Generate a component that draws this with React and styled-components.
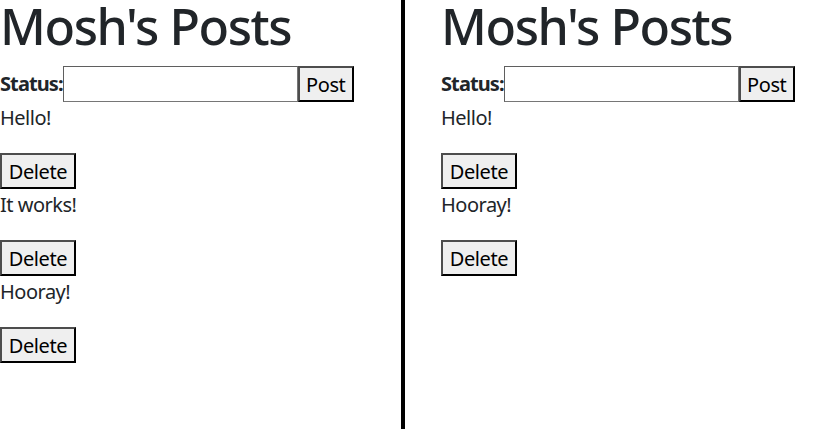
import React from "react";
import styled, { createGlobalStyle } from "styled-components";

const Global = createGlobalStyle`
  html, body { margin: 0; padding: 0; background: #fff; }
  body {
    font-family: "Noto Sans", "Open Sans", sans-serif;
    font-size: 20px;
    line-height: 1.5;
    color: #212529;
    overflow: hidden;
  }
`;

const Page = styled.div`
  display: flex;
  height: 429px;
`;

const Panel = styled.section`
  box-sizing: border-box;
  flex: ${(p) => (p.$first ? "0 0 405px" : "1")};
  padding-left: ${(p) => (p.$first ? "0" : "36px")};
  border-right: ${(p) => (p.$first ? "4px solid #000" : "none")};
`;

const Title = styled.h1`
  margin: 0 0 16px;
  padding-top: 1px;
  height: 50px;
  font-size: 50px;
  font-weight: 500;
  line-height: 50px;
  letter-spacing: -1.4px;
  white-space: nowrap;
`;

const Form = styled.form`
  display: flex;
  align-items: center;
  height: 36px;
  margin: -1px 0 0;
`;

const Label = styled.label`
  font-weight: 700;
  font-size: 20px;
  letter-spacing: -0.9px;
`;

const Input = styled.input`
  box-sizing: border-box;
  width: 235px;
  height: 36px;
  border: 1px solid #767676;
  border-top-color: #5f5f5f;
  border-left-color: #5f5f5f;
  padding: 1px 3px;
  font: inherit;
  margin: 0;
  background: #fff;
`;

const Button = styled.button`
  box-sizing: border-box;
  height: 36px;
  width: ${(p) => p.$w}px;
  padding: 0;
  margin: 0;
  background: #efefef;
  border: 2px solid;
  border-color: #4d4d4d #000 #000 #4d4d4d;
  font-family: inherit;
  font-size: 20px;
  color: #000;
  letter-spacing: -0.4px;
`;

const List = styled.div`
  padding-top: 1px;
`;

const PostText = styled.p`
  margin: 0 0 20px;
  line-height: 30px;
  letter-spacing: -0.5px;
`;

const Post = styled.div`
  display: flex;
  flex-direction: column;
  align-items: flex-start;
  & + & {
    margin-top: 1px;
  }
`;

function Posts({ items, first }) {
  return (
    <Panel $first={first}>
      <Title>Mosh's Posts</Title>
      <Form onSubmit={(e) => e.preventDefault()}>
        <Label htmlFor={first ? "s1" : "s2"}>Status:</Label>
        <Input id={first ? "s1" : "s2"} type="text" />
        <Button $w={56}>Post</Button>
      </Form>
      <List>
        {items.map((t) => (
          <Post key={t}>
            <PostText>{t}</PostText>
            <Button $w={76}>Delete</Button>
          </Post>
        ))}
      </List>
    </Panel>
  );
}

export default function App() {
  return (
    <>
      <Global />
      <Page>
        <Posts first items={["Hello!", "It works!", "Hooray!"]} />
        <Posts items={["Hello!", "Hooray!"]} />
      </Page>
    </>
  );
}
